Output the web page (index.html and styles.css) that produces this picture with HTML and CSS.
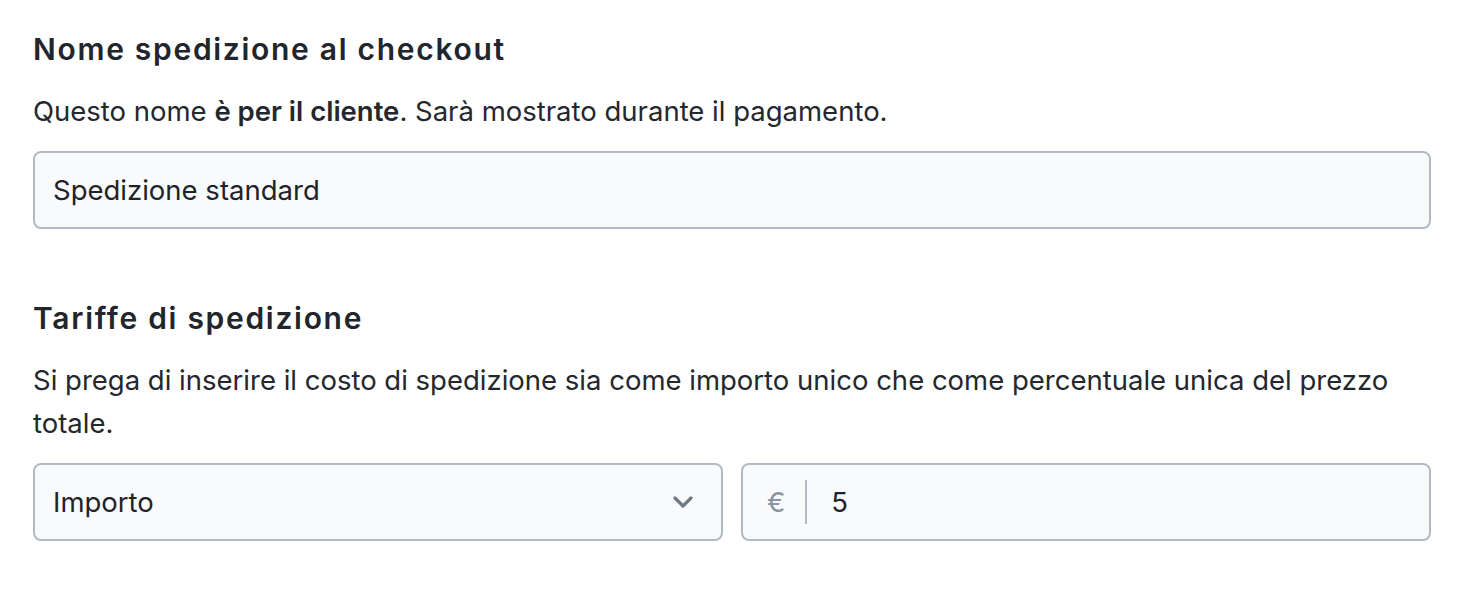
FILE: index.html
```html
<!DOCTYPE html>
<html lang="it">
<head>
<meta charset="utf-8">
<title>Spedizione</title>
<link rel="stylesheet" href="styles.css">
</head>
<body>
<main class="page">
  <section class="section">
    <h2 class="title">Nome spedizione al checkout</h2>
    <p class="desc">Questo nome <strong>è per il cliente</strong>. Sarà mostrato durante il pagamento.</p>
    <div class="field">Spedizione standard</div>
  </section>
  <section class="section second">
    <h2 class="title">Tariffe di spedizione</h2>
    <p class="desc">Si prega di inserire il costo di spedizione sia come importo unico che come percentuale unica del prezzo totale.</p>
    <div class="row">
      <div class="field select">
        <span>Importo</span>
        <svg class="chev" width="20" height="12" viewBox="0 0 20 12"><path d="M2 2 L10 10 L18 2" fill="none" stroke="#6f7888" stroke-width="3.2" stroke-linecap="round" stroke-linejoin="round"/></svg>
      </div>
      <div class="field money">
        <span class="cur">€</span>
        <span class="sep"></span>
        <span class="val">5</span>
      </div>
    </div>
  </section>
</main>
</body>
</html>
```
FILE: styles.css
```css
html, body { margin: 0; padding: 0; background: #fff; }
body {
  font-family: Inter, "Noto Sans", sans-serif;
  color: #1f2329;
}
.page {
  width: 1398px;
  padding: 30px 0 0 33px;
}
.section { display: flex; flex-direction: column; }
.second { margin-top: 70px; }
.title {
  margin: 0;
  font-family: Inter, "Noto Sans", sans-serif;
  font-weight: 600;
  font-size: 30px;
  line-height: 38px;
  letter-spacing: 1.7px;
  color: #22252b;
}
.desc {
  margin: 22px 0 18px;
  font-size: 27.5px;
  line-height: 43px;
  color: #24272d;
}
.desc strong { font-weight: 600; }
.field {
  box-sizing: border-box;
  height: 78px;
  border: 2px solid #b3bac4;
  border-radius: 8px;
  background: #f9fafb;
  display: flex;
  align-items: center;
  padding: 0 18px;
  font-size: 27.5px;
  color: #1f2329;
}
.row {
  display: grid;
  grid-template-columns: 1fr 1fr;
  gap: 18px;
}
.select { justify-content: space-between; padding-right: 28px; }
.money { padding-left: 24px; }
.cur { color: #8a93a1; }
.sep { width: 2px; height: 44px; background: #b3bac4; margin: 0 24px 0 20px; }
.val { color: #1f2329; }
```
